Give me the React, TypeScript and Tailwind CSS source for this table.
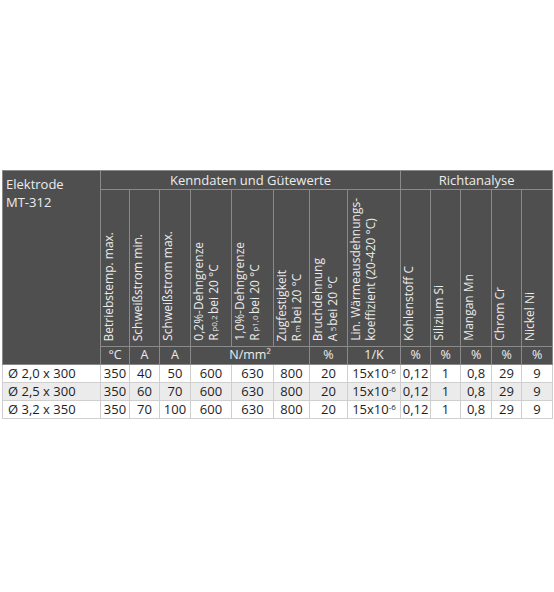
import React from 'react';

type Col = { w: number; label: React.ReactNode };

const cols: Col[] = [
  { w: 29, label: 'Betriebstemp. max.' },
  { w: 30, label: 'Schweißstrom min.' },
  { w: 31, label: 'Schweißstrom max.' },
  {
    w: 41,
    label: (
      <>
        0,2%-Dehngrenze
        <br />
        R<sub className="text-[8px]">p0,2</sub> bei 20 °C
      </>
    ),
  },
  {
    w: 42,
    label: (
      <>
        1,0%-Dehngrenze
        <br />
        R<sub className="text-[8px]">p1,0</sub> bei 20 °C
      </>
    ),
  },
  {
    w: 36,
    label: (
      <>
        Zugfestigkeit
        <br />
        R<sub className="text-[8px]">m</sub> bei 20 °C
      </>
    ),
  },
  {
    w: 38,
    label: (
      <>
        Bruchdehnung
        <br />
        A<sub className="text-[8px]">5</sub> bei 20 °C
      </>
    ),
  },
  {
    w: 53,
    label: (
      <>
        Lin. Wärmeausdehnungs-
        <br />
        koeffizient (20-420 °C)
      </>
    ),
  },
  { w: 30, label: 'Kohlenstoff C' },
  { w: 30, label: 'Silizium Si' },
  { w: 31, label: 'Mangan Mn' },
  { w: 30, label: 'Chrom Cr' },
  { w: 31, label: 'Nickel Ni' },
];

const rows = [
  ['Ø 2,0 x 300', '350', '40', '50', '600', '630', '800', '20'],
  ['Ø 2,5 x 300', '350', '60', '70', '600', '630', '800', '20'],
  ['Ø 3,2 x 350', '350', '70', '100', '600', '630', '800', '20'],
];

const head = 'border border-[#8a8a8a] bg-[#4f4f4f] text-[#ececec] font-normal';
const cell = 'border border-[#cfcfcf] text-center';

export default function App() {
  return (
    <div className="w-[554px] h-[592px] bg-white pt-[170px] pl-[2px] font-['Open_Sans',sans-serif]">
      <table className="table-fixed border-collapse w-[550px] text-[12.5px] leading-none">
        <colgroup>
          <col className="w-[98px]" />
          {cols.map((c, i) => (
            <col key={i} style={{ width: c.w }} />
          ))}
        </colgroup>
        <thead>
          <tr className="h-[19px]">
            <th rowSpan={3} className={`${head} text-left align-top px-[3px] pt-[4px] text-[13px] leading-[18px]`}>
              Elektrode
              <br />
              MT-312
            </th>
            <th colSpan={8} className={`${head} text-[13px]`}>
              Kenndaten und Gütewerte
            </th>
            <th colSpan={5} className={`${head} text-[13px]`}>
              Richtanalyse
            </th>
          </tr>
          <tr className="h-[157px]">
            {cols.map((c, i) => (
              <th key={i} className={`${head} align-bottom pb-[5px]`}>
                <div className="mx-auto w-fit [writing-mode:vertical-rl] rotate-180 text-left whitespace-nowrap leading-[15px] text-[12px]">
                  {c.label}
                </div>
              </th>
            ))}
          </tr>
          <tr className="h-[18px] text-[12.5px]">
            <th className={head}>°C</th>
            <th className={head}>A</th>
            <th className={head}>A</th>
            <th colSpan={3} className={head}>
              N/mm²
            </th>
            <th className={head}>%</th>
            <th className={head}>1/K</th>
            <th className={head}>%</th>
            <th className={head}>%</th>
            <th className={head}>%</th>
            <th className={head}>%</th>
            <th className={head}>%</th>
          </tr>
        </thead>
        <tbody className="text-[#1e1e1e] text-[13px]">
          {rows.map((r, i) => (
            <tr key={i} className={`h-[18px] ${i === 1 ? 'bg-[#ebebeb]' : 'bg-white'}`}>
              <td className="border border-[#cfcfcf] text-left pl-[5px]">{r[0]}</td>
              {r.slice(1).map((v, j) => (
                <td key={j} className={cell}>
                  {v}
                </td>
              ))}
              <td className={cell}>
                15x10<sup className="text-[8px]">-6</sup>
              </td>
              <td className={cell}>0,12</td>
              <td className={cell}>1</td>
              <td className={cell}>0,8</td>
              <td className={cell}>29</td>
              <td className={cell}>9</td>
            </tr>
          ))}
        </tbody>
      </table>
    </div>
  );
}
